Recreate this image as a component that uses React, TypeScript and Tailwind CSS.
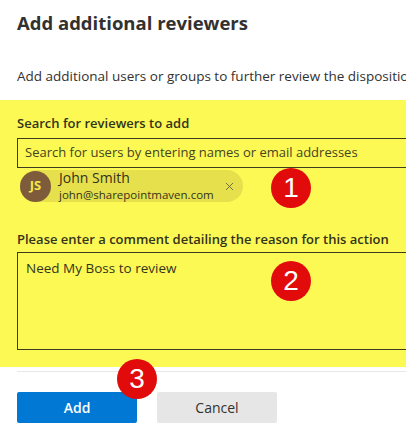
import { X } from 'lucide-react';

function Badge({ n, className }: { n: number; className: string }) {
  return (
    <div
      className={`absolute w-[40px] h-[40px] rounded-full bg-[#e20b0b] text-white flex items-center justify-center text-[28px] leading-none font-['Liberation_Sans',sans-serif] ${className}`}
    >
      {n}
    </div>
  );
}

export default function App() {
  return (
    <div className="relative w-[406px] h-[431px] overflow-hidden bg-white text-[#323130] font-['Open_Sans',sans-serif]">
      <div className="pl-[17px] pt-[9px]">
        <h1 className="text-[18.5px] leading-[28px] font-bold">Add additional reviewers</h1>
        <p className="mt-[29px] text-[13.5px] leading-[20px] whitespace-nowrap">
          Add additional users or groups to further review the disposition
        </p>
      </div>

      <div className="mt-[14px] h-[267px] bg-[#fcf955] pl-[17px] pt-[13px] text-[#34331b]">
        <label className="block text-[13px] leading-[20px] font-semibold">Search for reviewers to add</label>
        <div className="mt-[5px] h-[30px] w-[420px] border border-[#3d3c20] flex items-center pl-[7px] text-[13px] text-[#45441f] whitespace-nowrap">
          Search for users by entering names or email addresses
        </div>
        <div className="mt-[2px] ml-[3px] h-[32px] w-[223px] rounded-full bg-[#e6e04c] flex items-center">
          <div className="w-[31px] h-[31px] rounded-full bg-[#7e5c3b] text-[#f2e84c] text-[13px] font-bold flex items-center justify-center">
            JS
          </div>
          <div className="ml-[8px] flex-1 flex flex-col leading-none">
            <span className="text-[14px] leading-[18px]">John Smith</span>
            <span className="text-[11.5px] leading-[16px]">john@sharepointmaven.com</span>
          </div>
          <X className="w-[13px] h-[13px] mr-[7px] text-[#5a5930]" strokeWidth={1.5} />
        </div>

        <label className="block mt-[27px] text-[13px] leading-[20px] font-semibold">
          Please enter a comment detailing the reason for this action
        </label>
        <div className="mt-[3px] h-[98px] w-[420px] border border-[#3d3c20] pl-[8px] pt-[5px] text-[13.5px] leading-[20px]">
          Need My Boss to review
        </div>
      </div>

      <div className="mt-[4px] ml-[17px] h-px bg-[#e8e8e8]" />

      <div className="mt-[20px] pl-[17px] flex gap-[20px]">
        <button className="w-[120px] h-[31px] rounded-[2px] bg-[#0078d4] text-white text-[14px] font-semibold">
          Add
        </button>
        <button className="w-[120px] h-[31px] rounded-[2px] bg-[#e6e6e6] text-[#323130] text-[14px]">
          Cancel
        </button>
      </div>

      <Badge n={1} className="left-[271px] top-[168px]" />
      <Badge n={2} className="left-[271px] top-[261px]" />
      <Badge n={3} className="left-[117px] top-[359px]" />
    </div>
  );
}
